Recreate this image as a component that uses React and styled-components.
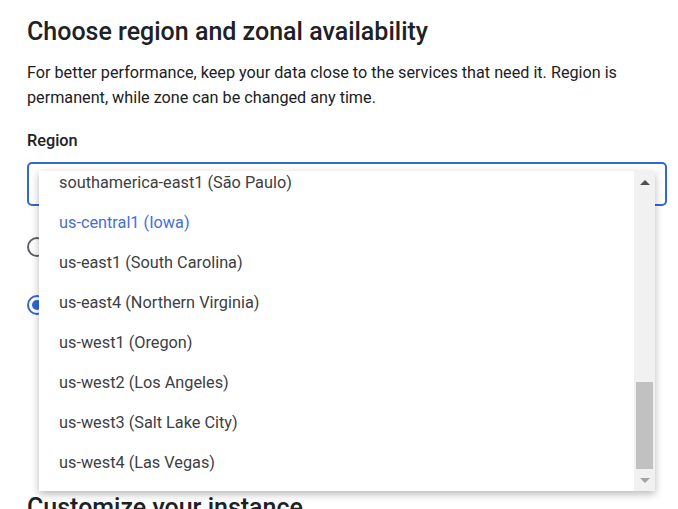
import React from "react";
import styled, { createGlobalStyle } from "styled-components";

const GlobalStyle = createGlobalStyle`
  body {
    margin: 0;
    background: #ffffff;
    font-family: Roboto, "Noto Sans", Arial, sans-serif;
    overflow: hidden;
  }
`;

const regions = [
  "asia-east1 (Taiwan)",
  "asia-east2 (Hong Kong)",
  "asia-northeast1 (Tokyo)",
  "asia-northeast2 (Osaka)",
  "asia-northeast3 (Seoul)",
  "asia-south1 (Mumbai)",
  "asia-southeast1 (Singapore)",
  "asia-southeast2 (Jakarta)",
  "australia-southeast1 (Sydney)",
  "europe-central2 (Warsaw)",
  "europe-north1 (Finland)",
  "europe-west1 (Belgium)",
  "europe-west2 (London)",
  "europe-west3 (Frankfurt)",
  "europe-west4 (Netherlands)",
  "europe-west6 (Zurich)",
  "northamerica-northeast1 (Montréal)",
  "southamerica-east1 (São Paulo)",
  "us-central1 (Iowa)",
  "us-east1 (South Carolina)",
  "us-east4 (Northern Virginia)",
  "us-west1 (Oregon)",
  "us-west2 (Los Angeles)",
  "us-west3 (Salt Lake City)",
  "us-west4 (Las Vegas)",
];

const selected = "us-central1 (Iowa)";

const Page = styled.div`
  padding: 17px 11px 0 27px;
  height: 509px;
  box-sizing: border-box;
  overflow: hidden;
`;

const Heading = styled.h2`
  margin: 0;
  font-size: 25px;
  line-height: 30px;
  font-weight: 500;
  color: #202124;
`;

const Description = styled.p`
  margin: 13px 0 0;
  font-size: 16.2px;
  line-height: 25px;
  color: #202124;
`;

const Label = styled.div`
  margin-top: 21px;
  font-size: 16.3px;
  line-height: 20px;
  font-weight: 500;
  color: #202124;
`;

const SelectWrap = styled.div`
  position: relative;
  margin-top: 11px;
`;

const SelectField = styled.div`
  height: 44px;
  box-sizing: border-box;
  border: 2px solid #3367d6;
  border-radius: 5px;
  display: flex;
  align-items: center;
  justify-content: space-between;
  padding: 0 14px;
  font-size: 16.3px;
  color: #202124;
`;

const Dropdown = styled.div`
  position: absolute;
  top: 9px;
  left: 12px;
  width: 616px;
  height: 320px;
  background: #ffffff;
  box-shadow: 0 3px 8px rgba(0, 0, 0, 0.28);
  display: flex;
  z-index: 10;
`;

const List = styled.ul`
  flex: 1;
  margin: 0;
  padding: 0 0 9px;
  list-style: none;
  overflow: hidden;
  display: flex;
  flex-direction: column;
  justify-content: flex-end;
`;

const Option = styled.li`
  flex: 0 0 40px;
  display: flex;
  align-items: center;
  padding-left: 20px;
  font-size: 16.3px;
  color: ${(p) => (p.$active ? "#4470d6" : "#3c4043")};
`;

const Scrollbar = styled.div`
  width: 21px;
  background: #f1f1f1;
  display: flex;
  flex-direction: column;
`;

const ScrollButton = styled.div`
  height: 22px;
  display: flex;
  align-items: center;
  justify-content: center;
`;

const Arrow = styled.div`
  width: 0;
  height: 0;
  border-left: 5px solid transparent;
  border-right: 5px solid transparent;
  ${(p) =>
    p.$down
      ? `border-top: 5px solid ${p.$dim ? "#a3a3a3" : "#505050"};`
      : `border-bottom: 5px solid ${p.$dim ? "#a3a3a3" : "#505050"};`}
`;

const Track = styled.div`
  flex: 1;
  display: flex;
  flex-direction: column;
  justify-content: flex-end;
  padding: 0 2px;
`;

const Thumb = styled.div`
  height: 87px;
  background: #c1c1c1;
`;

const RadioGroup = styled.div`
  margin-top: 31px;
  display: flex;
  flex-direction: column;
  gap: 38px;
`;

const RadioRow = styled.label`
  display: flex;
  align-items: center;
  gap: 14px;
  font-size: 16.3px;
  color: #202124;
  height: 20px;
`;

const RadioCircle = styled.span`
  width: 20px;
  height: 20px;
  box-sizing: border-box;
  border-radius: 50%;
  border: 2px solid ${(p) => (p.$checked ? "#3367d6" : "#5f6368")};
  display: flex;
  align-items: center;
  justify-content: center;
  &::after {
    content: "";
    width: 10px;
    height: 10px;
    border-radius: 50%;
    background: ${(p) => (p.$checked ? "#3367d6" : "transparent")};
  }
`;

const NextHeading = styled(Heading)`
  margin-top: 178px;
`;

export default function App() {
  return (
    <Page>
      <GlobalStyle />
      <Heading>Choose region and zonal availability</Heading>
      <Description>
        For better performance, keep your data close to the services that need it. Region is
        <br />
        permanent, while zone can be changed any time.
      </Description>
      <Label>Region</Label>
      <SelectWrap>
        <SelectField>
          <span>{selected}</span>
          <Arrow $down />
        </SelectField>
        <Dropdown>
          <List>
            {regions.map((r) => (
              <Option key={r} $active={r === selected}>
                {r}
              </Option>
            ))}
          </List>
          <Scrollbar>
            <ScrollButton>
              <Arrow />
            </ScrollButton>
            <Track>
              <Thumb />
            </Track>
            <ScrollButton>
              <Arrow $down $dim />
            </ScrollButton>
          </Scrollbar>
        </Dropdown>
      </SelectWrap>
      <RadioGroup>
        <RadioRow>
          <RadioCircle />
          Single zone
        </RadioRow>
        <RadioRow>
          <RadioCircle $checked />
          Multiple zones (Highly available)
        </RadioRow>
      </RadioGroup>
      <NextHeading>Customize your instance</NextHeading>
    </Page>
  );
}
